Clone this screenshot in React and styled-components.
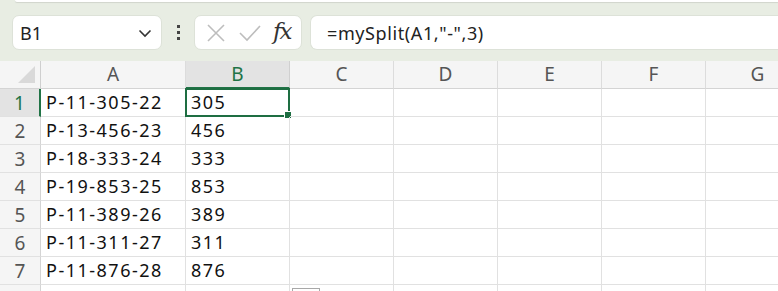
import styled, { createGlobalStyle } from "styled-components";

const Global = createGlobalStyle`
  html, body {
    margin: 0;
    padding: 0;
    background: #fff;
    font-family: "Noto Sans", "Liberation Sans", sans-serif;
  }
`;

const Page = styled.div`
  width: 778px;
  height: 291px;
  overflow: hidden;
  display: flex;
  flex-direction: column;
`;

const Top = styled.div`
  background: #e8ede3;
  display: flex;
  flex-direction: column;
`;

const RibbonEdge = styled.div`
  height: 2px;
  margin-left: 15px;
  background: #fff;
  border-bottom-left-radius: 8px;
  box-shadow: 0 1px 1px rgba(0, 0, 0, 0.1);
`;

const Bar = styled.div`
  display: flex;
  align-items: center;
  height: 35px;
  padding: 13px 0 11px 12px;
`;

const Box = styled.div`
  box-sizing: border-box;
  height: 35px;
  background: #fff;
  border: 1px solid #dde2d8;
  border-radius: 7px;
  display: flex;
  align-items: center;
`;

const NameBox = styled(Box)`
  width: 150px;
  padding: 0 8px 0 7px;
  justify-content: space-between;
  font-size: 18px;
  color: #222;
`;

const Dots = styled.div`
  width: 32px;
  display: flex;
  flex-direction: column;
  align-items: center;
  gap: 3px;
  span {
    width: 3px;
    height: 3px;
    background: #444;
  }
`;

const Buttons = styled(Box)`
  width: 108px;
  padding: 0 4px 0 10px;
  gap: 11px;
`;

const Fx = styled.span`
  font-family: "DejaVu Serif", "Liberation Serif", serif;
  font-style: italic;
  font-size: 23px;
  line-height: 1;
  color: #333;
  letter-spacing: -2px;
  padding-bottom: 3px;
`;

const FormulaBox = styled(Box)`
  flex: 1;
  margin-left: 8px;
  border-right: none;
  border-top-right-radius: 0;
  border-bottom-right-radius: 0;
  padding-left: 16px;
  font-size: 18px;
  letter-spacing: 0.6px;
  color: #222;
`;

const Grid = styled.div`
  display: grid;
  grid-template-columns: 41px 145px repeat(6, 104px);
  grid-auto-rows: 28px;
`;

const Cell = styled.div`
  position: relative;
  box-sizing: border-box;
  border-right: 1px solid #e1e1e1;
  border-bottom: 1px solid #e1e1e1;
  font-size: 18px;
  letter-spacing: 1.5px;
  color: #111;
  padding-left: 5px;
  line-height: 27px;
  white-space: nowrap;
`;

const ColHead = styled.div`
  box-sizing: border-box;
  background: ${(p) => (p.$active ? "#e3e3e3" : "#f5f5f5")};
  border-right: 1px solid ${(p) => (p.$active ? "#d0d0d0" : "#dcdcdc")};
  border-bottom: ${(p) => (p.$active ? "2px solid #217346" : "1px solid #d4d4d4")};
  color: ${(p) => (p.$active ? "#217346" : "#555")};
  font-size: 19px;
  display: flex;
  align-items: center;
  justify-content: center;
  line-height: 1;
`;

const Corner = styled(ColHead)`
  position: relative;
  border-right: 1px solid #cfcfcf;
  &::after {
    content: "";
    position: absolute;
    right: 5px;
    bottom: 5px;
    width: 0;
    height: 0;
    border-left: 17px solid transparent;
    border-bottom: 17px solid #d9d9d9;
  }
`;

const RowHead = styled.div`
  box-sizing: border-box;
  background: ${(p) => (p.$active ? "#e3e3e3" : "#f5f5f5")};
  border-right: ${(p) => (p.$active ? "2px solid #217346" : "1px solid #d4d4d4")};
  border-bottom: 1px solid #e1e1e1;
  color: ${(p) => (p.$active ? "#217346" : "#555")};
  font-size: 19px;
  text-align: center;
  line-height: 28px;
`;

const Selection = styled.div`
  position: absolute;
  left: -1px;
  top: -1px;
  right: -1px;
  bottom: -1px;
  border: 2px solid #1e6e42;
  pointer-events: none;
`;

const Handle = styled.div`
  position: absolute;
  right: -4px;
  bottom: -4px;
  width: 6px;
  height: 6px;
  background: #1e6e42;
  border: 1px solid #fff;
`;

const FillOptions = styled.div`
  position: absolute;
  left: 2px;
  top: 3px;
  width: 28px;
  height: 20px;
  box-sizing: border-box;
  border: 1px solid #a8a8a8;
  background: #fff;
`;

const cols = ["A", "B", "C", "D", "E", "F", "G"];
const data = [
  ["P-11-305-22", "305"],
  ["P-13-456-23", "456"],
  ["P-18-333-24", "333"],
  ["P-19-853-25", "853"],
  ["P-11-389-26", "389"],
  ["P-11-311-27", "311"],
  ["P-11-876-28", "876"],
];

export default function App() {
  return (
    <Page>
      <Global />
      <Top>
        <RibbonEdge />
        <Bar>
          <NameBox>
            <span>B1</span>
            <svg width="16" height="16" viewBox="0 0 16 16">
              <path d="M2.5 5.5 L8 11 L13.5 5.5" fill="none" stroke="#333" strokeWidth="1.6" />
            </svg>
          </NameBox>
          <Dots>
            <span />
            <span />
            <span />
          </Dots>
          <Buttons>
            <svg width="22" height="22" viewBox="0 0 22 22">
              <path d="M3 3 L19 19 M19 3 L3 19" stroke="#bdbdbd" strokeWidth="1.6" />
            </svg>
            <svg width="24" height="22" viewBox="0 0 24 22">
              <path d="M2 11 L9 18 L22 4" fill="none" stroke="#bdbdbd" strokeWidth="1.6" />
            </svg>
            <Fx>fx</Fx>
          </Buttons>
          <FormulaBox>=mySplit(A1,"-",3)</FormulaBox>
        </Bar>
      </Top>
      <Grid>
        <Corner />
        {cols.map((c) => (
          <ColHead key={c} $active={c === "B"}>
            {c}
          </ColHead>
        ))}
        {data.map((row, i) => (
          <>
            <RowHead key={`h${i}`} $active={i === 0}>
              {i + 1}
            </RowHead>
            {cols.map((c, j) => (
              <Cell key={`${i}-${c}`}>
                {row[j] || ""}
                {i === 0 && j === 1 && (
                  <Selection>
                    <Handle />
                  </Selection>
                )}
              </Cell>
            ))}
          </>
        ))}
        <RowHead />
        {cols.map((c, j) => (
          <Cell key={`last-${c}`}>{j === 2 && <FillOptions />}</Cell>
        ))}
      </Grid>
    </Page>
  );
}
